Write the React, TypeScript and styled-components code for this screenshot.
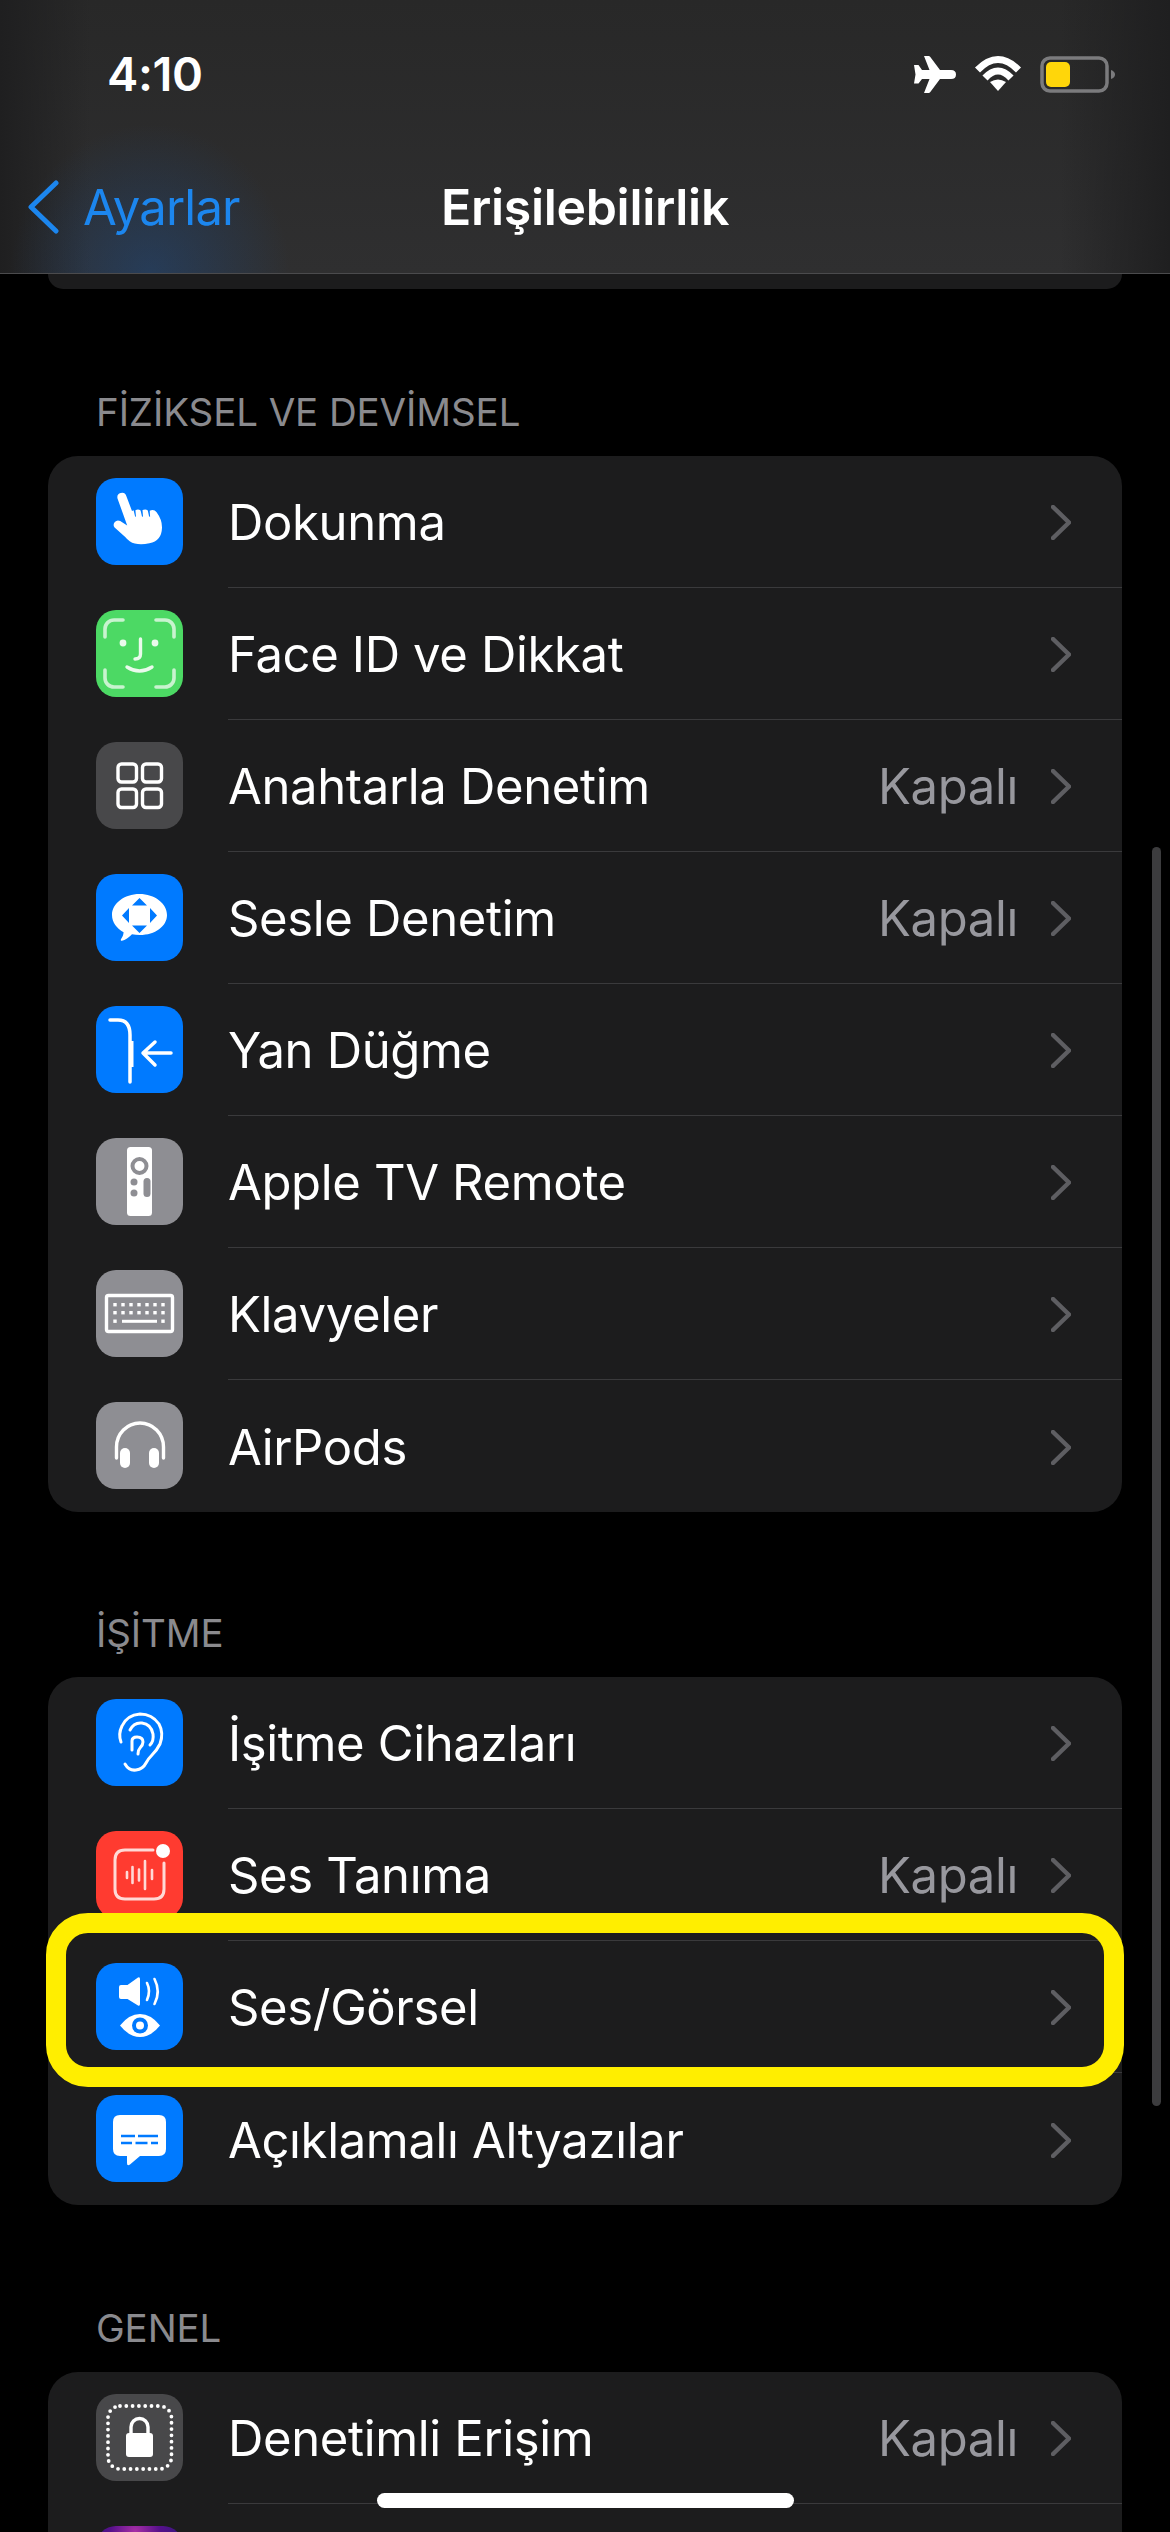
import React from "react";
import styled, { createGlobalStyle } from "styled-components";

const GlobalStyle = createGlobalStyle`
  html, body {
    margin: 0;
    padding: 0;
    background: #000;
    font-family: Inter, "Noto Sans", "Liberation Sans", sans-serif;
  }
`;

const Screen = styled.div`
  position: relative;
  width: 1170px;
  height: 2532px;
  overflow: hidden;
  background: #000;
  color: #fff;
`;

const Header = styled.header`
  box-sizing: border-box;
  height: 274px;
  border-bottom: 1px solid #4b4b4d;
  background:
    radial-gradient(ellipse 140px 150px at 150px 274px, rgba(24, 84, 160, 0.36), rgba(24, 84, 160, 0)),
    linear-gradient(90deg, #1f1f20 0, rgba(31, 31, 32, 0) 90px, rgba(31, 31, 32, 0) 1060px, #1f1f20 100%),
    linear-gradient(180deg, #282828 0, #2f2f30 100%);
`;

const StatusBar = styled.div`
  box-sizing: border-box;
  height: 148px;
  padding: 50px 55px 0 107px;
  display: flex;
  justify-content: space-between;
  align-items: flex-start;
`;

const Time = styled.div`
  font-size: 47px;
  line-height: 48px;
  font-weight: 600;
  letter-spacing: -0.4px;
`;

const StatusIcons = styled.div`
  display: flex;
  align-items: flex-start;
  padding-top: 6px;
  gap: 18px;
`;

const NavBar = styled.nav`
  display: grid;
  grid-template-columns: 1fr auto 1fr;
  align-items: center;
  height: 118px;
`;

const BackLink = styled.a`
  display: flex;
  align-items: center;
  gap: 24px;
  padding-left: 27px;
  color: #1c86ee;
  font-size: 49px;
  letter-spacing: -0.8px;
`;

const Title = styled.h1`
  margin: 0;
  font-size: 50px;
  font-weight: 600;
  letter-spacing: -0.3px;
`;

const TopStub = styled.div`
  height: 15px;
  margin: 0 48px;
  background: #1c1c1d;
  border-radius: 0 0 30px 30px;
`;

const SectionLabel = styled.div<{ $height: number }>`
  box-sizing: border-box;
  height: ${(p) => p.$height}px;
  padding: 0 0 20px 96px;
  display: flex;
  align-items: flex-end;
  color: #8a8a8e;
  font-size: 38.5px;
  line-height: 48px;
  letter-spacing: -0.1px;
`;

const Card = styled.section`
  margin: 0 48px;
  background: #1c1c1d;
  border-radius: 30px;
`;

const Row = styled.div`
  position: relative;
  display: flex;
  align-items: center;
  height: 132px;
  padding-left: 48px;
  gap: 45px;
`;

const Tile = styled.div<{ $bg: string }>`
  flex: none;
  width: 87px;
  height: 87px;
  margin-bottom: 1px;
  border-radius: 20px;
  background: ${(p) => p.$bg};
  svg {
    display: block;
  }
`;

const RowBody = styled.div<{ $last: boolean }>`
  box-sizing: border-box;
  flex: 1;
  height: 100%;
  display: flex;
  align-items: center;
  padding: 2px 51px 0 0;
  border-bottom: ${(p) => (p.$last ? "none" : "1px solid #3a3a3c")};
`;

const RowTitle = styled.span`
  flex: 1;
  font-size: 49px;
  letter-spacing: -0.35px;
`;

const RowValue = styled.span`
  color: #98989e;
  font-size: 49px;
  letter-spacing: -0.35px;
  margin-right: 33px;
`;

const Highlight = styled.div`
  position: absolute;
  z-index: 2;
  top: -28px;
  bottom: -14px;
  left: -2px;
  right: -2px;
  border: 20px solid #ffee00;
  border-radius: 42px;
  pointer-events: none;
`;

const ScrollThumb = styled.div`
  position: absolute;
  top: 847px;
  right: 9px;
  width: 9px;
  height: 1259px;
  border-radius: 5px;
  background: #3c3c3e;
`;

const HomeIndicator = styled.div`
  position: absolute;
  bottom: 24px;
  left: 377px;
  width: 417px;
  height: 15px;
  border-radius: 8px;
  background: #fff;
`;

const BLUE = "#007aff";
const GRAY = "#8e8e93";
const DARK = "#48484a";

const Glyph = ({ children }: { children: React.ReactNode }) => (
  <svg width="87" height="87" viewBox="0 0 87 87" fill="none" stroke="none">
    {children}
  </svg>
);

const HandIcon = () => (
  <Glyph>
    <path
      fill="#fff"
      d="M21.5 20.5a4.6 4.6 0 0 1 8.8-2.6L36 33l1.6-.8 1.5 6.4.9.2-.6-6.6q3-1.6 5.2.4l1.4 6 1 .1-.5-6.6q3.2-1.6 5.3.4l1.3 6.1 1 .1-.4-5.9q4.2-2 6.9 1.5 5.6 7.6 5.4 15.4-.4 13.3-12.6 15.6-8.4 1.6-14.6.2-5.4-1.4-9.6-6.6L18.6 49.6a4.4 4.4 0 0 1 5.6-6.5l7 4.3z"
    />
  </Glyph>
);

const FaceIcon = () => (
  <Glyph>
    <g stroke="#c8f3cf" strokeWidth="3.6" strokeLinecap="round">
      <path d="M9 27v-8a9 9 0 0 1 9-9h9M60 10h9a9 9 0 0 1 9 9v8M9 60v8a9 9 0 0 0 9 9h9M60 77h9a9 9 0 0 0 9-9v-8" />
    </g>
    <circle cx="27" cy="33" r="3.4" fill="#eafaec" />
    <circle cx="59" cy="33" r="3.4" fill="#eafaec" />
    <path
      d="M44.5 29v15q0 5-5.5 5M31 57q12.5 8 25 0"
      stroke="#eafaec"
      strokeWidth="3.4"
      strokeLinecap="round"
    />
  </Glyph>
);

const SwitchIcon = () => (
  <Glyph>
    <g stroke="#fff" strokeWidth="3.4">
      <rect x="22" y="22" width="18.5" height="18" rx="3.5" />
      <rect x="46.5" y="22" width="19" height="18" rx="3.5" />
      <rect x="22" y="47" width="18.5" height="18.5" rx="3.5" />
      <rect x="46.5" y="47" width="19" height="18.5" rx="3.5" />
    </g>
  </Glyph>
);

const VoiceIcon = () => (
  <Glyph>
    <path
      fill="#fff"
      d="M43.5 20c15.2 0 27.5 9.4 27.5 21 0 11.4-12 20-27 20-3 0-5.6-.3-8-.8-3 3-7 6-10 6.5-1.2.2-1.6-.9-.9-1.8 1.3-1.7 2.3-3.900 2.500-6.700C20.800 54.400 16 48.300 16 41c0-11.600 12.300-21 27.500-21z"
    />
    <g fill={BLUE}>
      <path d="M43.5 24l7.500 7.500H36zM43.500 59L36 51.500h15zM26 41.500l7-7.500v15zM61 41.500L54 34v15z" />
    </g>
  </Glyph>
);

const SideButtonIcon = () => (
  <Glyph>
    <g stroke="#fff" strokeWidth="3.5" strokeLinecap="round" strokeLinejoin="round">
      <path d="M14 14h8q12 0 12 15v47" />
      <path d="M36 35v26" strokeWidth="3" strokeLinecap="butt" />
      <path d="M75 47H47M59 36L47 47l12 12" />
    </g>
  </Glyph>
);

const RemoteIcon = () => (
  <Glyph>
    <rect x="31" y="9" width="25" height="69" rx="3.5" fill="#fff" />
    <circle cx="43.5" cy="28" r="7" stroke={GRAY} strokeWidth="4" />
    <circle cx="38" cy="44" r="3.5" fill={GRAY} />
    <circle cx="38" cy="55" r="3.5" fill={GRAY} />
    <rect x="47.5" y="40" width="7" height="19" rx="3.5" fill={GRAY} />
  </Glyph>
);

const KeyboardIcon = () => {
  const columns = [19, 27, 35, 43, 51, 59, 67];
  return (
    <Glyph>
      <rect x="10.5" y="25.5" width="66" height="36" rx="2" stroke="#fff" strokeWidth="3.4" />
      {[33, 41].map((y) =>
        columns.map((x) => <rect key={`${x}-${y}`} x={x - 1.7} y={y} width="3.4" height="3.4" fill="#fff" />)
      )}
      <rect x="17.3" y="49.5" width="3.4" height="3.4" fill="#fff" />
      <rect x="26" y="49.8" width="35" height="3" fill="#fff" />
      <rect x="65.3" y="49.5" width="3.4" height="3.4" fill="#fff" />
    </Glyph>
  );
};

const HeadphonesIcon = () => (
  <Glyph>
    <path d="M20.5 56V45a23.5 24 0 0 1 47 0v11" stroke="#fff" strokeWidth="3.4" strokeLinecap="round" />
    <rect x="24" y="46" width="10" height="20" rx="5" fill="#fff" />
    <rect x="53" y="46" width="10" height="20" rx="5" fill="#fff" />
  </Glyph>
);

const EarIcon = () => (
  <Glyph>
    <g stroke="#fff" strokeWidth="3" strokeLinecap="round" strokeLinejoin="round">
      <path d="M25 43q-3-8 1-16 5-11 18-12 12 0 19 10 5 9 1 20-3 6-8 11-4 4-6 8-3 6-10 7-7 1-11-6" />
      <path d="M34 31q4-8 12-7 9 1 11 11 1 7-3 11" />
      <path d="M36 51V42q0-4 5-4 6 0 6 5 0 3-3 6-2 2-2 6" />
    </g>
  </Glyph>
);

const SoundIcon = () => (
  <Glyph>
    <path
      d="M57 19H29q-10 0-10 10v29q0 10 10 10h29q10 0 10-10V32"
      stroke="#ffd9d6"
      strokeWidth="3"
      strokeLinecap="round"
    />
    <circle cx="67" cy="20" r="7" fill="#fff" />
    <path
      d="M31 41v6M36.5 36v16M43 38.5v11M49 30v28M56 39v9"
      stroke="#ffd9d6"
      strokeWidth="2.6"
      strokeLinecap="round"
    />
  </Glyph>
);

const AudioVisualIcon = () => (
  <Glyph>
    <path fill="#fff" d="M25 22h6.5L42 14.5q2-1 2 1.500v25q0 2.500-2 1.500L31.500 36H25q-2 0-2-2V24q0-2 2-2z" />
    <path d="M51 20q4 8 0 17M58.5 16q6.500 12.500 0 25" stroke="#fff" strokeWidth="2.6" strokeLinecap="round" />
    <path fill="#fff" d="M24 62.5Q33 51 44 51t20 11.5Q55 74 44 74T24 62.5z" />
    <circle cx="44" cy="62.5" r="8" fill={BLUE} />
    <circle cx="44" cy="62.5" r="4" fill="#fff" />
  </Glyph>
);

const CaptionsIcon = () => (
  <Glyph>
    <path
      fill="#fff"
      d="M24 20h39q7 0 7 7v27q0 7-7 7H44L34 69.5q-3 2-3-1.5V61h-7q-7 0-7-7V27q0-7 7-7z"
    />
    <path d="M25 41h14M42 41h20M25 48h11M39.5 48h12M55 48h7" stroke={BLUE} strokeWidth="2.6" />
  </Glyph>
);

const GuidedAccessIcon = () => (
  <Glyph>
    <rect
      x="12"
      y="12"
      width="63.5"
      height="63"
      rx="12"
      stroke="#fff"
      strokeWidth="3.8"
      strokeLinecap="round"
      strokeDasharray="0 6.3"
    />
    <path d="M35 41V33a8.5 8.5 0 0 1 17 0v8" stroke="#fff" strokeWidth="3.4" />
    <rect x="30" y="39" width="27" height="24" rx="3" fill="#fff" />
  </Glyph>
);

type RowItem = {
  title?: string;
  value?: string;
  bg: string;
  icon?: React.ReactNode;
  highlighted?: boolean;
};

const motorRows: RowItem[] = [
  { title: "Dokunma", bg: BLUE, icon: <HandIcon /> },
  { title: "Face ID ve Dikkat", bg: "#4cd964", icon: <FaceIcon /> },
  { title: "Anahtarla Denetim", value: "Kapalı", bg: DARK, icon: <SwitchIcon /> },
  { title: "Sesle Denetim", value: "Kapalı", bg: BLUE, icon: <VoiceIcon /> },
  { title: "Yan Düğme", bg: BLUE, icon: <SideButtonIcon /> },
  { title: "Apple TV Remote", bg: GRAY, icon: <RemoteIcon /> },
  { title: "Klavyeler", bg: GRAY, icon: <KeyboardIcon /> },
  { title: "AirPods", bg: GRAY, icon: <HeadphonesIcon /> },
];

const hearingRows: RowItem[] = [
  { title: "İşitme Cihazları", bg: BLUE, icon: <EarIcon /> },
  { title: "Ses Tanıma", value: "Kapalı", bg: "#ff3b30", icon: <SoundIcon /> },
  { title: "Ses/Görsel", bg: BLUE, icon: <AudioVisualIcon />, highlighted: true },
  { title: "Açıklamalı Altyazılar", bg: BLUE, icon: <CaptionsIcon /> },
];

// the second row is cut by the bottom of the screen, only its tile's top shows
const generalRows: RowItem[] = [
  { title: "Denetimli Erişim", value: "Kapalı", bg: DARK, icon: <GuidedAccessIcon /> },
  { bg: "radial-gradient(circle at 45% 6%, #a62fa6 0, #56108a 26%, #2a1a7a 60%, #123a7a 100%)" },
];

const Chevron = () => (
  <svg width="20" height="35" viewBox="0 0 20 35" fill="none">
    <path d="M2 2l16 15.5L2 33" stroke="#5e5e62" strokeWidth="4.5" strokeLinecap="round" strokeLinejoin="round" />
  </svg>
);

const SettingsCard = ({ rows }: { rows: RowItem[] }) => (
  <Card>
    {rows.map((row, i) => (
      <Row key={i}>
        <Tile $bg={row.bg}>{row.icon}</Tile>
        <RowBody $last={i === rows.length - 1}>
          <RowTitle>{row.title}</RowTitle>
          {row.value && <RowValue>{row.value}</RowValue>}
          {row.title && <Chevron />}
        </RowBody>
        {row.highlighted && <Highlight />}
      </Row>
    ))}
  </Card>
);

const Battery = () => (
  <svg width="75" height="37" viewBox="0 0 75 37" fill="none">
    <rect x="2" y="2" width="65" height="33" rx="8" stroke="#7b7b7d" strokeWidth="3.5" />
    <rect x="6" y="6" width="24" height="25" rx="5" fill="#ffd60a" />
    <path d="M71 14q4 1.5 4 4.5t-4 4.5z" fill="#7b7b7d" />
  </svg>
);

export default function App() {
  return (
    <Screen>
      <GlobalStyle />
      <Header>
        <StatusBar>
          <Time>4:10</Time>
          <StatusIcons>
            <svg width="42" height="37" viewBox="0 0 42 37">
              <path
                fill="#fff"
                d="M10 0h4.5q1.2 0 1.8 1L26 14h11q5 0 5 4.5T37 23H26l-9.7 13q-.6 1-1.800 1H10l5.500-14H8l-3.500 4.500H0l1.500-9L0 9h4.500L8 14h7.500z"
              />
            </svg>
            <svg width="48" height="35" viewBox="0 0 48 35">
              <path fill="none" stroke="#fff" strokeWidth="7" d="M3.5 14Q24-7 44.5 14M11 22Q24 8 37 22" />
              <path fill="#fff" d="M24 35l-8-9q8-5 16 0z" />
            </svg>
            <Battery />
          </StatusIcons>
        </StatusBar>
        <NavBar>
          <BackLink>
            <svg width="32" height="54" viewBox="0 0 32 54" fill="none">
              <path
                d="M29 3L4 27l25 24"
                stroke="#1c86ee"
                strokeWidth="5"
                strokeLinecap="round"
                strokeLinejoin="round"
              />
            </svg>
            Ayarlar
          </BackLink>
          <Title>Erişilebilirlik</Title>
        </NavBar>
      </Header>
      <TopStub />
      <SectionLabel $height={167}>FİZİKSEL VE DEVİMSEL</SectionLabel>
      <SettingsCard rows={motorRows} />
      <SectionLabel $height={165}>İŞİTME</SectionLabel>
      <SettingsCard rows={hearingRows} />
      <SectionLabel $height={167}>GENEL</SectionLabel>
      <SettingsCard rows={generalRows} />
      <ScrollThumb />
      <HomeIndicator />
    </Screen>
  );
}
